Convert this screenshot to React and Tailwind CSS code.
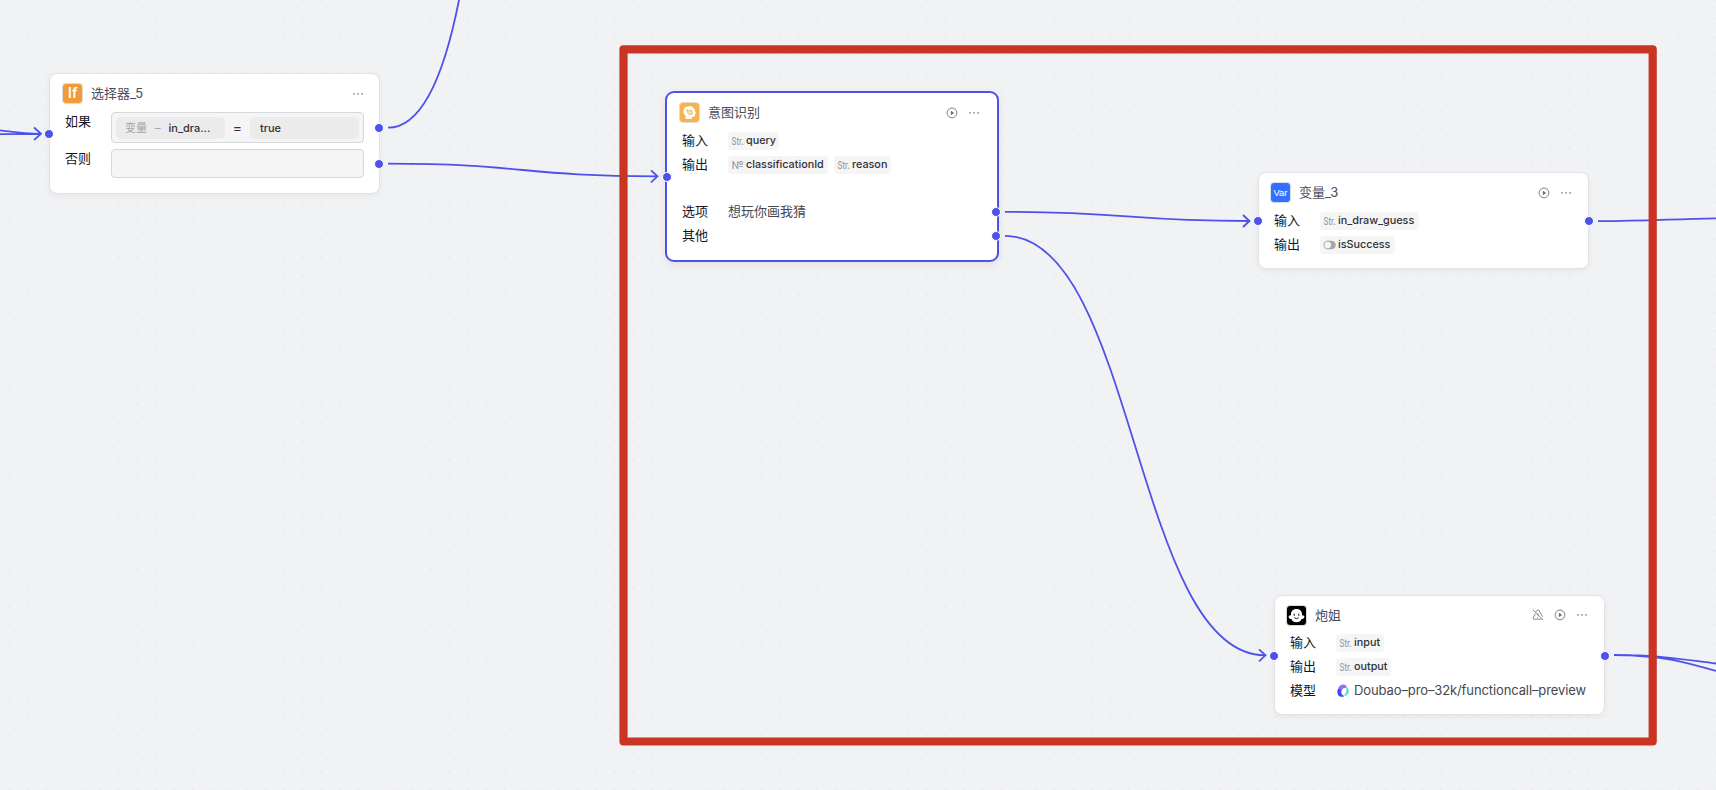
import React from "react";

const SANS = "font-['Inter','Noto_Sans_CJK_SC',sans-serif]";

function Port({ className }) {
  return <span className={`absolute size-[10px] rounded-full border border-white bg-[#4d53e8] ${className}`} />;
}

function Dots() {
  return (
    <svg className="size-3" viewBox="0 0 12 12" fill="#74767c">
      <rect x="1" y="5.2" width="1.8" height="1.3" rx=".5" />
      <rect x="5.1" y="5.2" width="1.8" height="1.3" rx=".5" />
      <rect x="9.2" y="5.2" width="1.8" height="1.3" rx=".5" />
    </svg>
  );
}

function Play() {
  return (
    <svg className="size-3" viewBox="0 0 12 12">
      <circle cx="6" cy="5.9" r="4.9" fill="none" stroke="#696b72" strokeWidth=".85" />
      <path d="M4.8 3.8 8.2 5.9 4.8 8Z" fill="#696b72" />
    </svg>
  );
}

function AlertOff() {
  return (
    <svg className="size-3" viewBox="0 0 12 12" fill="none" stroke="#74767c" strokeWidth=".85" strokeLinecap="round" strokeLinejoin="round">
      <path d="M4 2.8 5.2 1.2Q6 .4 6.8 1.2L10.4 7.4M9.2 10.2H2Q.8 10.1 1.2 9L3.3 5M1 1l10 9.8M6 5v1.4M6 8.2v.2" />
    </svg>
  );
}

function Header({ icon, title, className = "", children }) {
  return (
    <div className={`flex h-[21px] items-center gap-2 ${className}`}>
      {icon}
      <span className="flex-1 text-[13px] leading-[21px] text-[#4b4c5c]">{title}</span>
      <div className="flex items-center gap-[10px] pr-1">{children}</div>
    </div>
  );
}

function Row({ label, children }) {
  return (
    <div className="flex h-6 items-center">
      <span className="w-[46px] text-[13px] text-[#15161c]">{label}</span>
      <div className="flex items-center gap-[6px]">{children}</div>
    </div>
  );
}

function TypeMark({ type }) {
  if (type === "bool") {
    return (
      <svg className="-ml-px h-[10px] w-[14px] shrink-0" viewBox="0 0 14 10">
        <rect x=".4" y=".8" width="12.4" height="8.4" rx="4.2" fill="#a6a7aa" />
        <circle cx="4.7" cy="5" r="3.3" fill="#f5f5f5" />
      </svg>
    );
  }
  return (
    <svg className="-ml-px h-[16px] w-[14px] shrink-0 overflow-visible" viewBox="0 0 14 16">
      <text x=".5" y="11.9" textLength="12.3" lengthAdjust="spacingAndGlyphs" fontSize="11" fill="#9b9ca0" fontFamily="Inter, sans-serif">
        {type === "num" ? "№" : "Str."}
      </text>
    </svg>
  );
}

function Tag({ type = "str", width, children }) {
  return (
    <span className={`flex h-[18px] items-center gap-px rounded-[4px] bg-[#f5f5f5] pl-1 text-[10.8px] leading-[18px] font-medium text-[#303238] ${width}`}>
      <TypeMark type={type} />
      <span className="whitespace-nowrap">{children}</span>
    </span>
  );
}

function IfIcon() {
  return (
    <span className="flex size-[21px] items-center justify-center rounded-[4px] border border-[#e3dcd4] bg-[#f29a38] font-['Roboto',sans-serif] text-[15px] leading-none font-medium text-white">
      If
    </span>
  );
}

function IntentIcon() {
  return (
    <svg className="size-[21px]" viewBox="0 0 21 21">
      <rect x=".5" y=".5" width="20" height="20" rx="3.5" fill="#f7b24c" stroke="#e4ddd2" />
      <path d="M6.5 17V13.8C3.7 11.5 3.8 7 6.8 5.1 10.8 2.7 15.7 5 16.1 9.2L17 11.4 15.9 12V14.1Q15.7 15 14.6 15H12.8V17Z" fill="#fff" />
      <path d="M7.2 8.2H8.8V10.2Q9 12.3 11 12.3 13.2 12.2 13.2 10.2 13 8.2 11.2 8.2 10.4 8.3 10.5 9.4 10.7 10.3 11.6 9.9" fill="none" stroke="#f7b24c" strokeWidth="1.1" />
    </svg>
  );
}

function VarIcon() {
  return (
    <span className="flex size-[21px] items-center justify-center rounded-[4px] border border-[#d5dff2] bg-[#3370ff] font-['Liberation_Sans',sans-serif] text-[9.5px] leading-none text-white">
      Var
    </span>
  );
}

function BotIcon() {
  return (
    <svg className="size-[21px]" viewBox="0 0 21 21">
      <rect x=".5" y=".5" width="20" height="20" rx="3.5" fill="#000" stroke="#d9dadd" />
      <path d="M5 9C5 2.2 16 2.2 16 9V10.2Q19 10.3 18.2 12.4 17.4 14.3 15.5 14C14.6 18.3 6.4 18.3 5.5 14 3.6 14.3 2.8 12.4 2.8 12.4 2 10.3 5 10.2 5 10.2Z" fill="#fff" />
      <path d="M8.2 9v1.5M12.8 9v1.5M8.6 13q1.9 1.6 3.8 0" fill="none" stroke="#000" strokeWidth=".9" strokeLinecap="round" />
    </svg>
  );
}

function DoubaoIcon() {
  return (
    <svg className="ml-px h-[13px] w-[12px] shrink-0" viewBox="0 0 12 13">
      <path d="M4.5 12.5C.6 11.8.2 7.5 1.3 4.1 2.5.5 6.5-.4 8.7 1.3 10 2.4 9.7 3.6 9 4.2 6.5 3.4 4.6 5.3 4.3 8.2Z" fill="#9b6cf3" />
      <path d="M1 5C-.3 8.2.2 12 4 12.8 5.4 13 6.6 12.8 7.4 12 4.4 11.3 3.4 8.6 4.4 5.8Z" fill="#3f4df0" />
      <path d="M8.7 2.8C12 4 13 8 10.8 10.2 9.6 11.6 8.2 12.2 6.6 11.6 9.4 9.6 9.8 6 8.7 2.8Z" fill="#69dfc0" />
    </svg>
  );
}

const CARD = "absolute rounded-[8px] border border-[#e1e2e6] bg-white shadow-[0_2px_6px_rgba(0,0,0,0.05)]";

export default function App() {
  return (
    <main className={`relative h-[790px] w-[1716px] overflow-hidden bg-[#f1f2f4] ${SANS}`}>
      <svg className="absolute inset-0" width="1716" height="790" fill="none">
        <defs>
          <pattern id="grid" width="18.356" height="18.356" patternUnits="userSpaceOnUse" x="-0.2" y="-8.6">
            <circle cx="9.2" cy="9.2" r="1.1" fill="#e7e8eb" />
          </pattern>
        </defs>
        <rect width="1716" height="790" fill="url(#grid)" />
        <g stroke="#4d53e8" strokeWidth="1.8">
          <path d="M0 134.2H41M0 130.3C14 132 22 133.8 41 133.8M34 127.5 41 133.8 34 140" />
          <path d="M388 127.7C422 127.7 444 76 459 0" />
          <path d="M388 163.7C523 163.7 523 176.3 658 176.3M651 170.3 657.5 176.3 651 182.3" />
          <path d="M1005 211.8C1127 211.8 1127 221 1249 221M1243 215 1249.5 221 1243 227" />
          <path d="M1005 235.8C1135 235.8 1135 655.3 1265 655.3M1259 649.3 1265.5 655.3 1259 661.3" />
          <path d="M1598 221.2C1650 221.2 1670 219 1716 218.3" />
          <path d="M1614 655C1660 655 1680 659 1716 663.5M1614 655C1660 655 1685 662 1716 671" />
        </g>
      </svg>

      <section className={`${CARD} top-[73px] left-[49px] h-[121px] w-[331px] px-3 pt-[9px]`}>
        <Header icon={<IfIcon />} title="选择器_5" className="-mr-px"><Dots /></Header>
        <div className="mt-2 flex h-[31px]">
          <span className="w-[49px] pl-[3px] text-[13px] leading-[18px] text-[#15161c]">如果</span>
          <div className="flex h-[31px] w-[253px] items-center rounded-[4px] border border-[#d5d6d9] bg-[#f5f5f5] px-1">
            <div className="flex h-[22px] w-[109px] items-center rounded-[5px] bg-[#ebebeb] pt-px pl-[9px] text-[11px] text-[#a4a5a8]">
              <span>变量</span>
              <span className="mx-2">–</span>
              <span className="font-medium text-[#303238]">in_dra...</span>
            </div>
            <span className="flex-1 text-center text-[14px] leading-none text-[#303238]">=</span>
            <div className="flex h-[22px] w-[109px] items-center rounded-[5px] bg-[#ebebeb] pt-px pl-[10px] text-[11px] font-medium text-[#303238]">true</div>
          </div>
        </div>
        <div className="mt-[6px] flex">
          <span className="w-[49px] pl-[3px] text-[13px] leading-[18px] text-[#15161c]">否则</span>
          <div className="h-[29px] w-[253px] rounded-[4px] border border-[#d5d6d9] bg-[#f5f5f5]" />
        </div>
        <Port className="top-[55px] -left-[6px]" />
        <Port className="top-[49px] -right-[5px]" />
        <Port className="top-[85px] -right-[5px]" />
      </section>

      <section className="absolute top-[91px] left-[665px] h-[171px] w-[334px] rounded-[9px] border-2 border-[#4d53e8] bg-white px-3 pt-[9px] shadow-[0_2px_8px_rgba(0,0,0,0.08)]">
        <Header icon={<IntentIcon />} title="意图识别" className="mr-px"><Play /><Dots /></Header>
        <div className="mt-[5.5px] pl-[3px]">
          <Row label="输入"><Tag width="w-[51px]">query</Tag></Row>
          <Row label="输出">
            <Tag type="num" width="w-[100px]">classificationId</Tag>
            <Tag width="w-[57px]">reason</Tag>
          </Row>
        </div>
        <div className="mt-[23px] pl-[3px]">
          <Row label="选项"><span className="text-[13px] text-[#46484e]">想玩你画我猜</span></Row>
          <Row label="其他" />
        </div>
        <Port className="top-[79px] -left-[5.5px]" />
        <Port className="top-[114px] -right-[4px]" />
        <Port className="top-[138px] -right-[4px]" />
      </section>

      <section className={`${CARD} top-[172px] left-[1258px] h-[97px] w-[331px] px-3 pt-[9px]`}>
        <Header icon={<VarIcon />} title="变量_3" className="-ml-px"><Play /><Dots /></Header>
        <div className="mt-[5.5px] pl-[3px]">
          <Row label="输入"><Tag width="w-[99px]">in_draw_guess</Tag></Row>
          <Row label="输出"><Tag type="bool" width="w-[75px]">isSuccess</Tag></Row>
        </div>
        <Port className="top-[43px] -left-[6px]" />
        <Port className="top-[43px] -right-[5.5px]" />
      </section>

      <section className={`${CARD} top-[595px] left-[1274px] h-[120px] w-[331px] px-3 pt-[8.5px]`}>
        <Header icon={<BotIcon />} title="炮姐" className="-ml-px"><AlertOff /><Play /><Dots /></Header>
        <div className="mt-[5px] pl-[3px]">
          <Row label="输入"><Tag width="w-[48px]">input</Tag></Row>
          <Row label="输出"><Tag width="w-[55px]">output</Tag></Row>
          <Row label="模型">
            <DoubaoIcon />
            <span className="-ml-px text-[13px] tracking-[-0.11px] whitespace-nowrap text-[#46484e]">Doubao–pro–32k/functioncall–preview</span>
          </Row>
        </div>
        <Port className="top-[54.5px] -left-[6px]" />
        <Port className="top-[54.5px] -right-[5.5px]" />
      </section>

      <svg className="pointer-events-none absolute inset-0" width="1716" height="790" fill="none">
        <rect x="623.5" y="49.4" width="1029.2" height="692.1" stroke="#c93522" strokeWidth="8.2" strokeLinejoin="round" />
      </svg>
    </main>
  );
}
